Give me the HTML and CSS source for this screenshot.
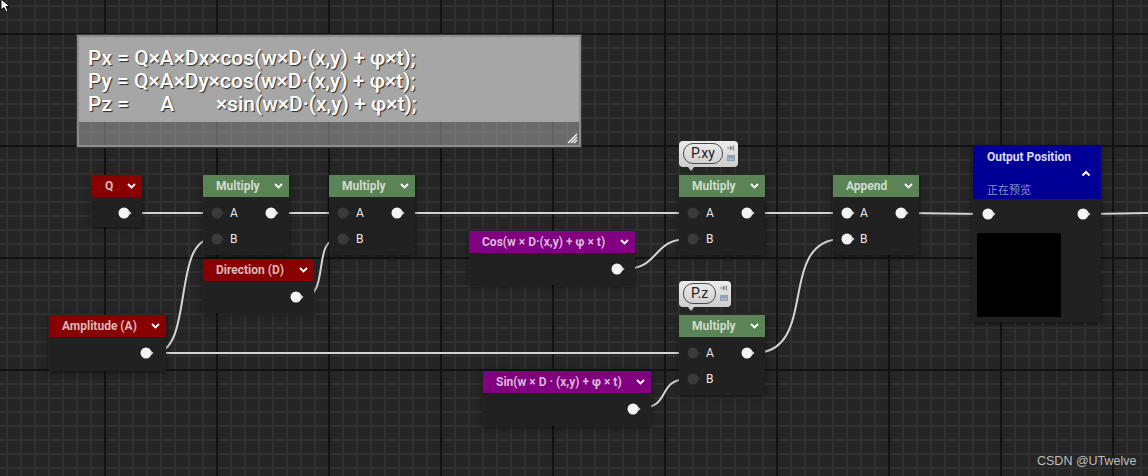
FILE: index.html
```html
<!DOCTYPE html>
<html>
<head>
<meta charset="utf-8">
<link rel="stylesheet" href="styles.css">
</head>
<body>
<div class="canvas">
  <svg class="cursor" width="14" height="14" viewBox="0 0 14 14"><path d="M1 0 L1 11 L4 8.5 L6 13 L8 12 L6 7.5 L10 7.5 Z" fill="#fff" stroke="#000" stroke-width="1"/></svg>

  <div class="comment">
    <div class="comment-text">Px = Q×A×Dx×cos(w×D·(x,y) + φ×t);
Py = Q×A×Dy×cos(w×D·(x,y) + φ×t);
Pz =      A        ×sin(w×D·(x,y) + φ×t);</div>
    <div class="comment-band">
      <svg class="grip" width="12" height="12" viewBox="0 0 12 12"><path d="M11 2 L2 11 M11 5 L5 11 M11 8 L8 11" stroke="#fff" stroke-width="1.2"/></svg>
    </div>
  </div>

  <svg class="wires" width="1148" height="476" viewBox="0 0 1148 476">
    <g fill="none" stroke="#d4d4d4" stroke-width="2">
      <path d="M131 213 L212 213"/>
      <path d="M278 213 L338 213"/>
      <path d="M404 213 L688 213"/>
      <path d="M754 213 L842 213"/>
      <path d="M908 213 L983 214"/>
      <path d="M1090 214 L1148 213"/>
      <path d="M154 353 C 194 353, 172 239, 212 239"/>
      <path d="M154 353 L688 353"/>
      <path d="M303 297 C 330 297, 312 239, 338 239"/>
      <path d="M624 269 C 660 269, 652 239, 688 239"/>
      <path d="M640 408 C 672 408, 656 379, 688 379"/>
      <path d="M754 353 C 820 353, 776 239, 842 239"/>
    </g>
  </svg>

  <!-- Q -->
  <div class="node n-q">
    <div class="hdr red"><span class="title">Q</span><svg class="chev" width="9" height="6" viewBox="0 0 9 6"><path d="M1 1 L4.5 4.5 L8 1" fill="none" stroke="#fff" stroke-width="1.8"/></svg></div>
    <div class="body">
      <div class="row"><svg class="pin out" width="14" height="12" viewBox="0 0 14 12"><circle cx="6" cy="6" r="5.5"/><path d="M10.5 3.5 L13.5 6 L10.5 8.5 Z"/></svg></div>
    </div>
  </div>

  <!-- Multiply 1 -->
  <div class="node n-m1 mult">
    <div class="hdr green"><span class="title">Multiply</span><svg class="chev" width="9" height="6" viewBox="0 0 9 6"><path d="M1 1 L4.5 4.5 L8 1" fill="none" stroke="#fff" stroke-width="1.8"/></svg></div>
    <div class="body">
      <div class="row"><svg class="pin in" width="14" height="12" viewBox="0 0 14 12"><circle cx="6" cy="6" r="5.5"/><path d="M10.5 3.5 L13.5 6 L10.5 8.5 Z"/></svg><span class="lbl">A</span><svg class="pin out" width="14" height="12" viewBox="0 0 14 12"><circle cx="6" cy="6" r="5.5"/><path d="M10.5 3.5 L13.5 6 L10.5 8.5 Z"/></svg></div>
      <div class="row"><svg class="pin in" width="14" height="12" viewBox="0 0 14 12"><circle cx="6" cy="6" r="5.5"/><path d="M10.5 3.5 L13.5 6 L10.5 8.5 Z"/></svg><span class="lbl">B</span></div>
    </div>
  </div>

  <!-- Multiply 2 -->
  <div class="node n-m2 mult">
    <div class="hdr green"><span class="title">Multiply</span><svg class="chev" width="9" height="6" viewBox="0 0 9 6"><path d="M1 1 L4.5 4.5 L8 1" fill="none" stroke="#fff" stroke-width="1.8"/></svg></div>
    <div class="body">
      <div class="row"><svg class="pin in" width="14" height="12" viewBox="0 0 14 12"><circle cx="6" cy="6" r="5.5"/><path d="M10.5 3.5 L13.5 6 L10.5 8.5 Z"/></svg><span class="lbl">A</span><svg class="pin out" width="14" height="12" viewBox="0 0 14 12"><circle cx="6" cy="6" r="5.5"/><path d="M10.5 3.5 L13.5 6 L10.5 8.5 Z"/></svg></div>
      <div class="row"><svg class="pin in" width="14" height="12" viewBox="0 0 14 12"><circle cx="6" cy="6" r="5.5"/><path d="M10.5 3.5 L13.5 6 L10.5 8.5 Z"/></svg><span class="lbl">B</span></div>
    </div>
  </div>

  <!-- Direction -->
  <div class="node n-dir">
    <div class="hdr red"><span class="title">Direction (D)</span><svg class="chev" width="9" height="6" viewBox="0 0 9 6"><path d="M1 1 L4.5 4.5 L8 1" fill="none" stroke="#fff" stroke-width="1.8"/></svg></div>
    <div class="body">
      <div class="row"><svg class="pin out" width="14" height="12" viewBox="0 0 14 12"><circle cx="6" cy="6" r="5.5"/><path d="M10.5 3.5 L13.5 6 L10.5 8.5 Z"/></svg></div>
    </div>
  </div>

  <!-- Amplitude -->
  <div class="node n-amp">
    <div class="hdr red"><span class="title">Amplitude (A)</span><svg class="chev" width="9" height="6" viewBox="0 0 9 6"><path d="M1 1 L4.5 4.5 L8 1" fill="none" stroke="#fff" stroke-width="1.8"/></svg></div>
    <div class="body">
      <div class="row"><svg class="pin out" width="14" height="12" viewBox="0 0 14 12"><circle cx="6" cy="6" r="5.5"/><path d="M10.5 3.5 L13.5 6 L10.5 8.5 Z"/></svg></div>
    </div>
  </div>

  <!-- Cos -->
  <div class="node n-cos">
    <div class="hdr purple"><span class="title">Cos(w × D·(x,y) + φ × t)</span><svg class="chev" width="9" height="6" viewBox="0 0 9 6"><path d="M1 1 L4.5 4.5 L8 1" fill="none" stroke="#fff" stroke-width="1.8"/></svg></div>
    <div class="body">
      <div class="row"><svg class="pin out" width="14" height="12" viewBox="0 0 14 12"><circle cx="6" cy="6" r="5.5"/><path d="M10.5 3.5 L13.5 6 L10.5 8.5 Z"/></svg></div>
    </div>
  </div>

  <!-- Sin -->
  <div class="node n-sin">
    <div class="hdr purple"><span class="title">Sin(w × D · (x,y) + φ × t)</span><svg class="chev" width="9" height="6" viewBox="0 0 9 6"><path d="M1 1 L4.5 4.5 L8 1" fill="none" stroke="#fff" stroke-width="1.8"/></svg></div>
    <div class="body">
      <div class="row"><svg class="pin out" width="14" height="12" viewBox="0 0 14 12"><circle cx="6" cy="6" r="5.5"/><path d="M10.5 3.5 L13.5 6 L10.5 8.5 Z"/></svg></div>
    </div>
  </div>

  <!-- Multiply P.xy -->
  <div class="bubble b-xy">
    <span class="pill">P.xy</span>
    <span class="bicons">
      <svg width="8" height="6" viewBox="0 0 8 6"><path d="M0 3 H5 M3 1 L5 3 L3 5 M6.5 0.5 V5.5" fill="none" stroke="#8a8a8a" stroke-width="1.2"/></svg>
      <svg width="8" height="6" viewBox="0 0 8 6"><rect x="0" y="0" width="8" height="6" fill="#8da0b4"/><path d="M1.5 4 H2.5 M3.5 4 H4.5 M5.5 4 H6.5" stroke="#fff" stroke-width="1"/></svg>
    </span>
  </div>
  <div class="node n-mxy mult">
    <div class="hdr green"><span class="title">Multiply</span><svg class="chev" width="9" height="6" viewBox="0 0 9 6"><path d="M1 1 L4.5 4.5 L8 1" fill="none" stroke="#fff" stroke-width="1.8"/></svg></div>
    <div class="body">
      <div class="row"><svg class="pin in" width="14" height="12" viewBox="0 0 14 12"><circle cx="6" cy="6" r="5.5"/><path d="M10.5 3.5 L13.5 6 L10.5 8.5 Z"/></svg><span class="lbl">A</span><svg class="pin out" width="14" height="12" viewBox="0 0 14 12"><circle cx="6" cy="6" r="5.5"/><path d="M10.5 3.5 L13.5 6 L10.5 8.5 Z"/></svg></div>
      <div class="row"><svg class="pin in" width="14" height="12" viewBox="0 0 14 12"><circle cx="6" cy="6" r="5.5"/><path d="M10.5 3.5 L13.5 6 L10.5 8.5 Z"/></svg><span class="lbl">B</span></div>
    </div>
  </div>

  <!-- Multiply P.z -->
  <div class="bubble b-z">
    <span class="pill">P.z</span>
    <span class="bicons">
      <svg width="8" height="6" viewBox="0 0 8 6"><path d="M0 3 H5 M3 1 L5 3 L3 5 M6.5 0.5 V5.5" fill="none" stroke="#8a8a8a" stroke-width="1.2"/></svg>
      <svg width="8" height="6" viewBox="0 0 8 6"><rect x="0" y="0" width="8" height="6" fill="#8da0b4"/><path d="M1.5 4 H2.5 M3.5 4 H4.5 M5.5 4 H6.5" stroke="#fff" stroke-width="1"/></svg>
    </span>
  </div>
  <div class="node n-mz mult">
    <div class="hdr green"><span class="title">Multiply</span><svg class="chev" width="9" height="6" viewBox="0 0 9 6"><path d="M1 1 L4.5 4.5 L8 1" fill="none" stroke="#fff" stroke-width="1.8"/></svg></div>
    <div class="body">
      <div class="row"><svg class="pin in" width="14" height="12" viewBox="0 0 14 12"><circle cx="6" cy="6" r="5.5"/><path d="M10.5 3.5 L13.5 6 L10.5 8.5 Z"/></svg><span class="lbl">A</span><svg class="pin out" width="14" height="12" viewBox="0 0 14 12"><circle cx="6" cy="6" r="5.5"/><path d="M10.5 3.5 L13.5 6 L10.5 8.5 Z"/></svg></div>
      <div class="row"><svg class="pin in" width="14" height="12" viewBox="0 0 14 12"><circle cx="6" cy="6" r="5.5"/><path d="M10.5 3.5 L13.5 6 L10.5 8.5 Z"/></svg><span class="lbl">B</span></div>
    </div>
  </div>

  <!-- Append -->
  <div class="node n-app mult">
    <div class="hdr green"><span class="title">Append</span><svg class="chev" width="9" height="6" viewBox="0 0 9 6"><path d="M1 1 L4.5 4.5 L8 1" fill="none" stroke="#fff" stroke-width="1.8"/></svg></div>
    <div class="body">
      <div class="row"><svg class="pin out" width="14" height="12" viewBox="0 0 14 12"><circle cx="6" cy="6" r="5.5"/><path d="M10.5 3.5 L13.5 6 L10.5 8.5 Z"/></svg><span class="lbl">A</span><svg class="pin out" width="14" height="12" viewBox="0 0 14 12"><circle cx="6" cy="6" r="5.5"/><path d="M10.5 3.5 L13.5 6 L10.5 8.5 Z"/></svg></div>
      <div class="row"><svg class="pin out" width="14" height="12" viewBox="0 0 14 12"><circle cx="6" cy="6" r="5.5"/><path d="M10.5 3.5 L13.5 6 L10.5 8.5 Z"/></svg><span class="lbl">B</span></div>
    </div>
  </div>

  <!-- Output Position -->
  <div class="node n-outp">
    <div class="hdr-out">
      <span class="title-out">Output Position</span>
      <span class="chev-up"><svg width="10" height="7" viewBox="0 0 10 7"><path d="M1.5 5.5 L5 2 L8.5 5.5" fill="none" stroke="#fff" stroke-width="2"/></svg></span>
      <span class="sub-out">正在预览</span>
    </div>
    <div class="body body-out">
      <div class="row"><svg class="pin out" width="14" height="12" viewBox="0 0 14 12"><circle cx="6" cy="6" r="5.5"/><path d="M10.5 3.5 L13.5 6 L10.5 8.5 Z"/></svg><svg class="pin out" width="14" height="12" viewBox="0 0 14 12"><circle cx="6" cy="6" r="5.5"/><path d="M10.5 3.5 L13.5 6 L10.5 8.5 Z"/></svg></div>
      <div class="preview"></div>
    </div>
  </div>

  <div class="watermark">CSDN @UTwelve</div>
</div>
</body>
</html>
```

FILE: styles.css
```css
html, body {
  margin: 0;
  padding: 0;
}
body {
  width: 1148px;
  height: 476px;
  overflow: hidden;
  background-color: #252525;
  background-image:
    linear-gradient(90deg, #121212 0 2px, transparent 2px),
    linear-gradient(180deg, #121212 0 2px, transparent 2px),
    linear-gradient(90deg, #303030 0 2px, transparent 2px),
    linear-gradient(180deg, #303030 0 2px, transparent 2px);
  background-size: 112px 112px, 112px 112px, 14px 14px, 14px 14px;
  background-position: -8px 0, 0 33px, 6px 0, 0 5px;
  font-family: Roboto, "Liberation Sans", sans-serif;
}
.canvas {
  position: relative;
  width: 1148px;
  height: 476px;
}
.cursor {
  position: absolute;
  left: 0;
  top: -1px;
}

/* comment box */
.comment {
  position: absolute;
  left: 77px;
  top: 35px;
  width: 504px;
  height: 112px;
  box-sizing: border-box;
  border: 2px solid #8c8c8c;
  box-shadow: 0 0 0 1px #3a3a3a;
  display: flex;
  flex-direction: column;
}
.comment-text {
  background: #a6a6a6;
  height: 85px;
  box-sizing: border-box;
  padding: 10px 0 0 9px;
  white-space: pre;
  color: #fff;
  font-family: Roboto, "Liberation Sans", sans-serif;
  font-weight: 500;
  font-size: 21px;
  line-height: 23px;
  letter-spacing: 0;
  text-shadow: 1px 1px 1px rgba(0,0,0,0.75);
}
.comment-band {
  flex: 1;
  background: rgba(175,175,175,0.5);
  display: flex;
  justify-content: flex-end;
  align-items: flex-end;
  padding: 0 1px 1px 0;
}

/* wires */
.wires {
  position: absolute;
  left: 0;
  top: 0;
}

/* nodes */
.node {
  position: absolute;
  background: #212121;
  box-shadow: 0 1px 5px rgba(0,0,0,0.55);
}
.hdr {
  height: 22px;
  display: flex;
  align-items: center;
  justify-content: space-between;
  padding: 0 6px 0 13px;
  box-sizing: border-box;
}
.hdr .title {
  font-family: Roboto, "Liberation Sans", sans-serif;
  font-weight: 700;
  font-size: 12px;
  color: rgba(255,255,255,0.72);
  white-space: nowrap;
}
.chev { display: block; }
.red { background: #880000; }
.green { background: #5a8455; }
.purple { background: #800080; }

.body {
  padding: 3px 10px 3px 8px;
}
.row {
  height: 26px;
  display: flex;
  align-items: center;
}
.row .pin.out:last-child { margin-left: auto; }
.lbl {
  margin-left: 5px;
  font-size: 12px;
  color: #e8e8e8;
  font-family: Roboto, "Liberation Sans", sans-serif;
}
.pin { display: block; flex: none; }
.pin.out circle { fill: #f4f4f4; }
.pin.out path { fill: #d8d8d8; }
.pin.in circle { fill: #3a3a3a; }
.pin.in path { fill: #333; }

.n-q { left: 92px; top: 175px; width: 50px; }
.n-q .body { padding-bottom: 1px; }
.n-m1 { left: 203px; top: 175px; width: 86px; }
.n-m2 { left: 329px; top: 175px; width: 86px; }
.n-dir { left: 203px; top: 259px; width: 111px; }
.n-dir .body { padding-bottom: 3px; }
.n-amp { left: 49px; top: 315px; width: 117px; }
.n-amp .body { padding-bottom: 5px; padding-right: 12px; }
.n-cos { left: 469px; top: 231px; width: 166px; }
.n-cos .body { padding-bottom: 3px; }
.n-sin { left: 483px; top: 371px; width: 168px; }
.n-sin .body { padding-bottom: 4px; }
.n-mxy { left: 679px; top: 175px; width: 86px; }
.n-mz { left: 679px; top: 315px; width: 86px; }
.n-app { left: 833px; top: 175px; width: 86px; }

/* comment bubbles */
.bubble {
  position: absolute;
  height: 26px;
  box-sizing: border-box;
  padding: 2px 3px 0 4px;
  background: linear-gradient(#ececec, #cdcdcd);
  border-radius: 4px;
  display: flex;
  align-items: flex-start;
  gap: 4px;
}
.bubble::after {
  content: "";
  position: absolute;
  left: 9px;
  bottom: -4px;
  border-left: 3px solid transparent;
  border-right: 3px solid transparent;
  border-top: 4px solid #cdcdcd;
}
.b-xy { left: 679px; top: 141px; width: 59px; }
.b-z { left: 679px; top: 281px; width: 52px; }
.pill {
  height: 19px;
  padding: 0 7px;
  border: 1px solid #4a4a4a;
  border-radius: 10px;
  font-size: 14px;
  line-height: 19px;
  color: #222;
  font-family: Roboto, "Liberation Sans", sans-serif;
}
.bicons {
  display: flex;
  flex-direction: column;
  gap: 4px;
  padding-top: 2px;
}
.bicons svg { display: block; }

/* output node */
.n-outp { left: 973px; top: 146px; width: 128px; }
.hdr-out {
  background: #000096;
  height: 53px;
  box-sizing: border-box;
  padding: 3px 10px 2px 14px;
  display: flex;
  flex-direction: column;
}
.title-out {
  font-weight: 700;
  font-size: 12px;
  line-height: 16px;
  color: #dcdcf0;
}
.chev-up {
  height: 16px;
  display: flex;
  justify-content: flex-end;
  align-items: center;
}
.chev-up svg { display: block; }
.sub-out {
  font-family: "Noto Sans CJK SC", sans-serif;
  font-size: 11px;
  line-height: 16px;
  color: #8c8cc4;
}
.body-out {
  padding: 2px 10px 5px 4px;
}
.body-out .row { padding-left: 5px; }
.preview {
  margin-top: 6px;
  width: 84px;
  height: 84px;
  background: #000;
}

.watermark {
  position: absolute;
  left: 1037px;
  top: 452px;
  font-family: "Liberation Sans", "Noto Sans", sans-serif;
  font-size: 12.5px;
  color: #bdbdbd;
  line-height: 18px;
}
```
